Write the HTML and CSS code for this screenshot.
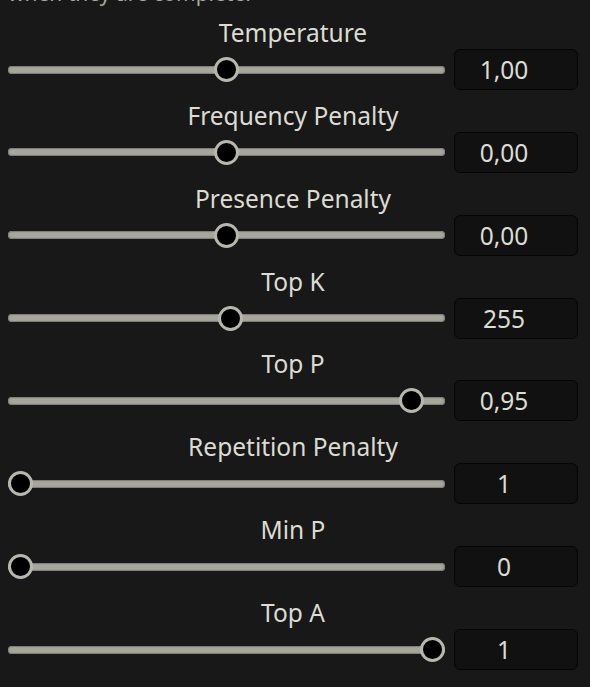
FILE: index.html
```html
<!DOCTYPE html>
<html lang="en">
<head>
  <meta charset="UTF-8">
  <meta name="viewport" content="width=device-width, initial-scale=1.0">
  <title>Sampler Settings</title>
  <link rel="stylesheet" href="styles.css">
</head>
<body>
  <div class="sampler-panel">
    <p class="hint">when they are complete.</p>

    <!-- Temperature -->
    <div class="sampler-row">
      <div class="sampler-label">Temperature</div>
      <div class="sampler-controls">
        <input type="range" class="sampler-slider" min="0" max="2" step="0.01" value="1">
        <input type="text" class="sampler-value" value="1,00">
      </div>
    </div>

    <!-- Frequency Penalty -->
    <div class="sampler-row">
      <div class="sampler-label">Frequency Penalty</div>
      <div class="sampler-controls">
        <input type="range" class="sampler-slider" min="-2" max="2" step="0.01" value="0">
        <input type="text" class="sampler-value" value="0,00">
      </div>
    </div>

    <!-- Presence Penalty -->
    <div class="sampler-row">
      <div class="sampler-label">Presence Penalty</div>
      <div class="sampler-controls">
        <input type="range" class="sampler-slider" min="-2" max="2" step="0.01" value="0">
        <input type="text" class="sampler-value" value="0,00">
      </div>
    </div>

    <!-- Top K -->
    <div class="sampler-row">
      <div class="sampler-label">Top K</div>
      <div class="sampler-controls">
        <input type="range" class="sampler-slider" min="0" max="500" step="1" value="255">
        <input type="text" class="sampler-value" value="255">
      </div>
    </div>

    <!-- Top P -->
    <div class="sampler-row">
      <div class="sampler-label">Top P</div>
      <div class="sampler-controls">
        <input type="range" class="sampler-slider" min="0" max="1" step="0.01" value="0.95">
        <input type="text" class="sampler-value" value="0,95">
      </div>
    </div>

    <!-- Repetition Penalty -->
    <div class="sampler-row">
      <div class="sampler-label">Repetition Penalty</div>
      <div class="sampler-controls">
        <input type="range" class="sampler-slider" min="1" max="2" step="0.01" value="1">
        <input type="text" class="sampler-value" value="1">
      </div>
    </div>

    <!-- Min P -->
    <div class="sampler-row">
      <div class="sampler-label">Min P</div>
      <div class="sampler-controls">
        <input type="range" class="sampler-slider" min="0" max="1" step="0.01" value="0">
        <input type="text" class="sampler-value" value="0">
      </div>
    </div>

    <!-- Top A -->
    <div class="sampler-row">
      <div class="sampler-label">Top A</div>
      <div class="sampler-controls">
        <input type="range" class="sampler-slider" min="0" max="1" step="0.01" value="1">
        <input type="text" class="sampler-value" value="1">
      </div>
    </div>
  </div>
</body>
</html>
```

FILE: styles.css
```css
/* Global Styles */
body {
  margin: 0;
  padding: 0;
  background: #181818;
  color: #dcdcd2;
  font-family: 'Noto Sans', 'Open Sans', sans-serif;
  overflow: hidden;
}

.sampler-panel {
  padding: 0 12px 0 8px;
}

.hint {
  margin: -20px 0 12px 0;
  font-size: 21px;
  line-height: 26px;
  color: #a9a9a1;
}

/* Each sampler row */
.sampler-row {
  padding-bottom: 10.86px;
}

.sampler-label {
  text-align: center;
  font-size: 24.5px;
  line-height: 30px;
  margin-bottom: 1px;
}

.sampler-controls {
  display: flex;
  align-items: center;
  gap: 9px;
}

/* Slider */
.sampler-slider {
  -webkit-appearance: none;
  appearance: none;
  flex: 1;
  margin: 0;
  height: 26px;
  background: transparent;
}

.sampler-slider::-webkit-slider-runnable-track {
  height: 8px;
  border-radius: 4px;
  background: #a6a69d;
  box-shadow: inset 0 0 1px 1px #7d7d76;
}

.sampler-slider::-webkit-slider-thumb {
  -webkit-appearance: none;
  appearance: none;
  width: 25px;
  height: 25px;
  margin-top: -8.5px;
  border-radius: 50%;
  background: #000;
  border: 3px solid #b7b7ad;
  box-sizing: border-box;
}

/* Number box */
.sampler-value {
  width: 124px;
  height: 41px;
  box-sizing: border-box;
  padding: 0 24px 0 0;
  background: #111111;
  border: 1px solid #050505;
  border-radius: 6px;
  color: #dcdcd2;
  font-family: inherit;
  font-size: 24.5px;
  text-align: center;
  outline: none;
}
```
